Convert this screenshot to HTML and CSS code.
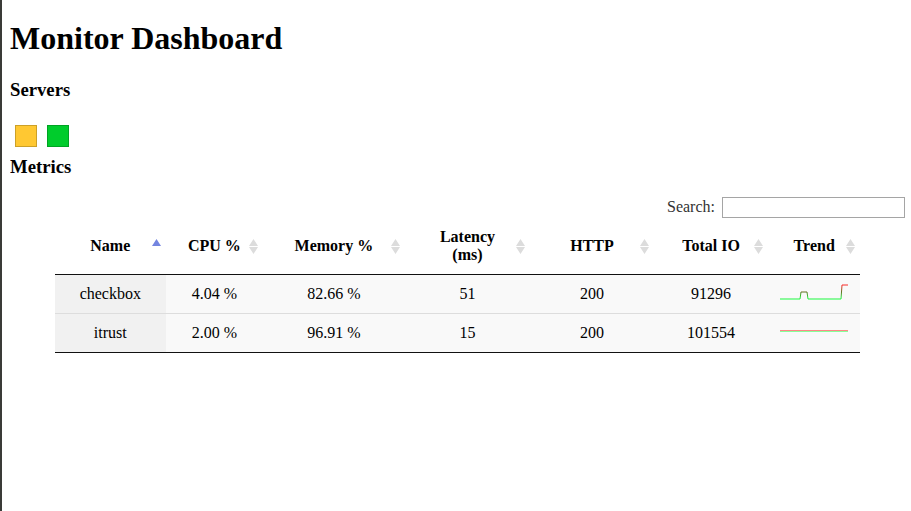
FILE: index.html
```html
<!DOCTYPE html>
<html lang="en">
<head>
<meta charset="utf-8">
<title>Monitor Dashboard</title>
<link rel="stylesheet" href="styles.css">
</head>
<body>
<h1>Monitor Dashboard</h1>
<h3>Servers</h3>
<div class="servers">
  <div class="server warning"></div>
  <div class="server healthy"></div>
</div>
<h3 class="metrics-title">Metrics</h3>
<div class="filter">
  <label for="search">Search:</label>
  <input id="search" type="search">
</div>
<table class="metrics">
  <colgroup>
    <col class="col-name"><col class="col-cpu"><col class="col-memory"><col class="col-latency"><col class="col-http"><col class="col-io"><col class="col-trend">
  </colgroup>
  <thead>
    <tr>
      <th aria-sort="ascending">Name<svg class="sort" viewBox="0 0 9 15"><path class="active" d="M4.5 0L9 7H0z"/></svg></th>
      <th>CPU %<svg class="sort" viewBox="0 0 9 15"><path d="M4.5 0L9 7H0zM0 8h9L4.5 15z"/></svg></th>
      <th>Memory %<svg class="sort" viewBox="0 0 9 15"><path d="M4.5 0L9 7H0zM0 8h9L4.5 15z"/></svg></th>
      <th>Latency<br>(ms)<svg class="sort" viewBox="0 0 9 15"><path d="M4.5 0L9 7H0zM0 8h9L4.5 15z"/></svg></th>
      <th>HTTP<svg class="sort" viewBox="0 0 9 15"><path d="M4.5 0L9 7H0zM0 8h9L4.5 15z"/></svg></th>
      <th>Total IO<svg class="sort" viewBox="0 0 9 15"><path d="M4.5 0L9 7H0zM0 8h9L4.5 15z"/></svg></th>
      <th>Trend<svg class="sort" viewBox="0 0 9 15"><path d="M4.5 0L9 7H0zM0 8h9L4.5 15z"/></svg></th>
    </tr>
  </thead>
  <tbody>
    <tr>
      <td>checkbox</td><td>4.04 %</td><td>82.66 %</td><td>51</td><td>200</td><td>91296</td>
      <td><svg class="trend" viewBox="0 0 68 20">
        <defs><linearGradient id="load" gradientUnits="userSpaceOnUse" x1="0" y1="15" x2="0" y2="1"><stop offset="0" stop-color="#18ff40"/><stop offset=".5" stop-color="#5f7020"/><stop offset="1" stop-color="#ff2828"/></linearGradient></defs>
        <path stroke="url(#load)" d="M0 15H20L21 8H27L28 15H61L62 1H68"/>
      </svg></td>
    </tr>
    <tr>
      <td>itrust</td><td>2.00 %</td><td>96.91 %</td><td>15</td><td>200</td><td>101554</td>
      <td><svg class="trend" viewBox="0 0 68 20"><rect fill="#ff8888" y="7" width="68" height="1"/><rect fill="#88ff99" y="8" width="68" height="1"/></svg></td>
    </tr>
  </tbody>
</table>
</body>
</html>
```
FILE: styles.css
```css
html {
  min-height: 100%;
  border-left: 2px solid #3a3b38;
  box-sizing: border-box;
  background: #fff;
}

body {
  margin: 0 6px 0 8px;
  font-family: "Liberation Serif", "Times New Roman", serif;
  font-size: 16px;
  line-height: 18px;
  color: #000;
  display: flow-root;
}

h1 {
  margin: 20px 0 22px;
  font-size: 32px;
  line-height: 37px;
}

h3 {
  margin: 0 0 18px;
  line-height: 22px;
}

.servers {
  display: flex;
  gap: 10px;
  padding: 6px 5px 9px;
}

.server {
  width: 20px;
  height: 20px;
  border: 1px solid;
}

.warning {
  background: #ffc832;
  border-color: #cca028;
}

.healthy {
  background: #00cc2c;
  border-color: #00a323;
}

.metrics-title {
  margin-bottom: 19px;
}

.filter {
  display: flex;
  justify-content: flex-end;
  align-items: flex-start;
  gap: 7px;
  line-height: 20px;
  color: #333;
}

.filter input {
  width: 183px;
  height: 21px;
  box-sizing: border-box;
  margin: 0;
  padding: 1px;
  border: 1px solid #a5a5a5;
  border-radius: 0;
  background: #fff;
  appearance: none;
}

.metrics {
  width: 90%;
  margin: 0 auto;
  table-layout: fixed;
  border-collapse: separate;
  border-spacing: 0;
  border-bottom: 1px solid #111;
  text-align: center;
}

.col-name { width: 111px; }
.col-cpu { width: 97px; }
.col-memory { width: 142px; }
.col-latency { width: 125px; }
.col-http { width: 124px; }
.col-io { width: 114px; }
.col-trend { width: 92px; }

.metrics th {
  position: relative;
  padding: 10px 18px;
  border-bottom: 1px solid #111;
  white-space: nowrap;
}

.metrics td {
  height: 38px;
  padding: 0 10px;
  background: #f9f9f9;
}

.metrics td:first-child {
  background: #f1f1f1;
}

.metrics tr + tr td {
  border-top: 1px solid #ddd;
}

.sort {
  position: absolute;
  top: 21px;
  right: 5px;
  width: 9px;
  height: 15px;
  fill: #dcdcdc;
}

.sort .active {
  fill: #7485e0;
}

.trend {
  display: block;
  width: 68px;
  height: 20px;
  margin: 0 auto;
  fill: none;
}
```
